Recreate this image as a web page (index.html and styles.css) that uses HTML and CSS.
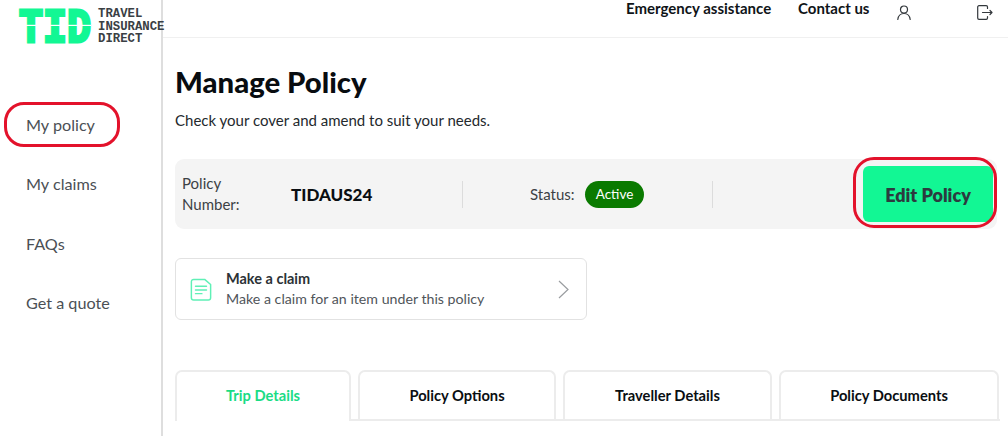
FILE: index.html
```html
<!DOCTYPE html>
<html lang="en">
<head>
<meta charset="utf-8">
<title>Manage Policy</title>
<link rel="stylesheet" href="styles.css">
</head>
<body>
<div class="page">
  <aside class="sidebar">
    <div class="logo">
      <div class="logo-mark">TID</div>
      <div class="logo-text">TRAVEL<br>INSURANCE<br>DIRECT</div>
    </div>
    <nav class="side-nav">
      <a class="side-link circled">My policy</a>
      <a class="side-link">My claims</a>
      <a class="side-link">FAQs</a>
      <a class="side-link">Get a quote</a>
    </nav>
  </aside>
  <div class="content">
    <header class="topbar">
      <a class="top-link emergency">Emergency assistance</a>
      <a class="top-link contact">Contact us</a>
      <svg class="icon-user" width="14" height="15" viewBox="0 0 14 15" fill="none" stroke="#33383c" stroke-width="1.2" stroke-linecap="round"><circle cx="7" cy="4.500" r="3.500"/><path d="M.8 14.500c.5-3.800 2.800-6 6.200-6s5.700 2.200 6.200 6"/></svg>
      <svg class="icon-exit" width="16" height="15" viewBox="0 0 16 15" fill="none" stroke="#33383c" stroke-width="1.200" stroke-linecap="round" stroke-linejoin="round"><path d="M10.500 3.500V2A1.300 1.300 0 0 0 9.200.7H2A1.300 1.300 0 0 0 .7 2v11A1.300 1.300 0 0 0 2 14.300h7.200a1.300 1.300 0 0 0 1.300-1.300v-1.500"/><path d="M5.500 7.500h9.500M13 5.500l2 2-2 2"/></svg>
    </header>
    <main class="main">
      <h1 class="title">Manage Policy</h1>
      <p class="subtitle">Check your cover and amend to suit your needs.</p>
      <section class="policy-bar">
        <div class="policy-label">Policy<br>Number:</div>
        <div class="policy-number">TIDAUS24</div>
        <div class="divider first"></div>
        <div class="status-label">Status:</div>
        <div class="status-pill">Active</div>
        <div class="divider second"></div>
        <div class="edit-wrap">
          <button class="edit-btn">Edit Policy</button>
          <span class="ring"></span>
        </div>
      </section>
      <a class="claim-card">
        <svg class="claim-icon" width="22" height="23" viewBox="0 0 24 25" fill="none" stroke="#5ff0b6" stroke-width="1.600" stroke-linecap="round" stroke-linejoin="round"><path d="M4 1.500h12l6.500 5.500v14.500a2.500 2.500 0 0 1-2.500 2.500H4a2.500 2.500 0 0 1-2.500-2.500V4A2.500 2.500 0 0 1 4 1.500Z"/><path d="M6 9h12M6 13h12M6 17h7"/></svg>
        <div class="claim-text">
          <div class="claim-title">Make a claim</div>
          <div class="claim-sub">Make a claim for an item under this policy</div>
        </div>
        <svg class="claim-chevron" width="11" height="19" viewBox="0 0 11 19" fill="none" stroke="#9a9da0" stroke-width="1.200"><path d="M1 1l9 8.500L1 18"/></svg>
      </a>
      <nav class="tabs">
        <a class="tab tab-trip active">Trip Details</a>
        <a class="tab tab-options">Policy Options</a>
        <a class="tab tab-traveller">Traveller Details</a>
        <a class="tab tab-docs">Policy Documents</a>
      </nav>
    </main>
  </div>
</div>
</body>
</html>
```
FILE: styles.css
```css
* { box-sizing: border-box; }
html, body { margin: 0; height: 100%; background: #fff; overflow: hidden; }
body { font-family: Lato, "Open Sans", sans-serif; color: #0f1418; }
.page { display: flex; height: 436px; }

.sidebar { width: 163px; flex: none; border-right: 2px solid #dedede; }
.logo { display: flex; gap: 7px; padding: 0 0 0 19px; height: 102px; width: 170px; }
.logo-mark {
  position: relative; width: 72px; height: 45px; margin-top: 1.500px;
  font: 700 40px/45px "Liberation Mono", monospace;
  color: #12f794; -webkit-text-stroke: 2.500px #12f794; transform: scaleY(1.200);
  transform-origin: top; white-space: nowrap;
}
.logo-mark::after { content: ""; position: absolute; left: 0; top: 18.700px; width: 72px; height: 1px; background: #fff; }
.logo-text { margin-top: 8px; font: 700 12.300px/12.500px "Liberation Mono", monospace; color: #3a4044; white-space: nowrap; }

.side-nav { display: flex; flex-direction: column; }
.side-link { position: relative; display: block; height: 59.400px; padding: 12px 0 0 26px; font-size: 16.200px; line-height: 22px; color: #4b5055; }
.circled::after {
  content: ""; box-sizing: border-box; position: absolute; left: 4px; top: 0; width: 116px; height: 45px;
  border: 3.500px solid #e3122b; border-radius: 20px;
}

.content { flex: 1; min-width: 0; }
.topbar { position: relative; height: 38px; border-bottom: 1px solid #f0f0f0; }
.top-link { position: absolute; top: -2px; font-size: 15px; line-height: 20px; font-weight: 700; color: #0f1418; white-space: nowrap; }
.emergency { left: 463px; }
.contact { left: 635px; }
.icon-user { position: absolute; left: 734px; top: 5px; }
.icon-exit { position: absolute; left: 814px; top: 5px; }

.main { padding: 27px 8px 0 12px; }
.title { margin: 0; font-size: 29.300px; line-height: 34px; font-weight: 900; color: #080c10; }
.subtitle { margin: 10px 0 0; font-size: 15px; line-height: 22px; color: #24292d; }

.policy-bar { position: relative; display: flex; align-items: center; height: 70px; margin: 28px 3px 0 0; padding-left: 7px; background: #f4f4f4; border-radius: 9px; }
.policy-label { width: 109px; font-size: 15px; line-height: 21px; color: #3c4145; }
.policy-number { width: 171px; font-size: 17px; font-weight: 900; color: #0a0e12; }
.divider { width: 1px; height: 27px; background: #dcdcdc; }
.status-label { margin-left: 67px; width: 55px; font-size: 15px; color: #3c4145; }
.status-pill { width: 59px; height: 27px; border-radius: 14px; background: #0a7a00; color: #fff; font-size: 13.500px; line-height: 27px; text-align: center; }
.divider.second { margin-left: 68px; }
.edit-wrap { position: relative; margin-left: auto; margin-right: 4px; }
.edit-btn { display: block; width: 130px; height: 56px; border: 0; border-radius: 6px; background: #12f794; color: #2c3b3f; font: 800 18px/56px Lato, sans-serif; }
.ring { position: absolute; left: -10px; top: -9px; width: 144px; height: 71px; border: 3.500px solid #e3122b; border-radius: 21px; }

.claim-card { display: flex; align-items: center; width: 412px; height: 62px; margin-top: 29px; padding: 0 17px 0 14px; border: 1px solid #e2e2e2; border-radius: 6px; }
.claim-icon { flex: none; }
.claim-text { flex: 1; margin-left: 14px; }
.claim-title { font-size: 14.500px; line-height: 20px; font-weight: 700; color: #2c3236; }
.claim-sub { font-size: 14.200px; line-height: 20px; color: #50555a; }
.claim-chevron { flex: none; }

.tabs { display: flex; gap: 7px; height: 51px; margin-top: 50px; border-bottom: 2px solid #ececec; }
.tab { display: block; height: 49px; padding-top: 13px; border: 2px solid #ececec; border-bottom: 0; border-radius: 7px 7px 0 0; text-align: center; font-size: 14.700px; line-height: 20px; font-weight: 700; color: #0a0e12; }
.tab-trip { width: 176px; height: 51px; color: #19dc85; background: #fff; }
.tab-options { width: 198px; }
.tab-traveller { width: 209px; }
.tab-docs { width: 220px; }
```
